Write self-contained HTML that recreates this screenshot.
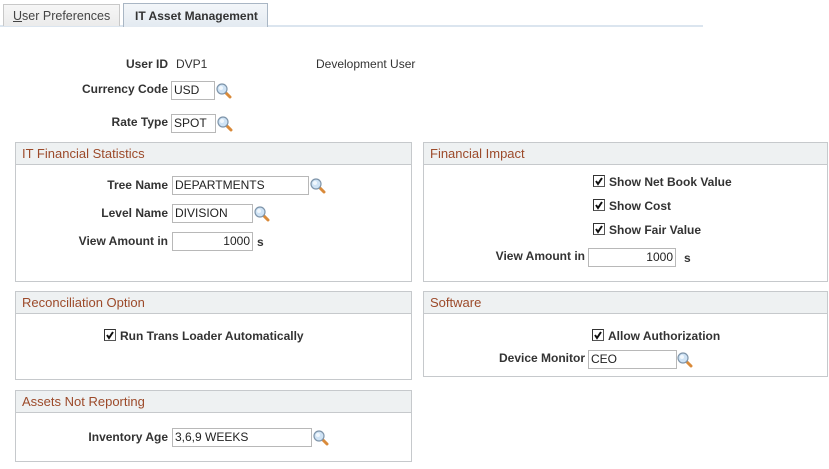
<!DOCTYPE html>
<html><head><meta charset="utf-8"><style>
*{margin:0;padding:0;box-sizing:border-box}
body{width:829px;height:469px;background:#fff;font-family:"Liberation Sans",Arial,sans-serif;font-size:12px;color:#333;position:relative;overflow:hidden}
.a{position:absolute;white-space:nowrap}
.lbl{position:absolute;font-weight:bold;color:#333;text-align:right;white-space:nowrap}
.inp{position:absolute;border:1px solid #b8b8b8;background:#fff;height:19px;font-size:12px;line-height:17px;padding-left:2px;color:#222;white-space:nowrap}
.r{text-align:right;padding-right:2px}
.box{position:absolute;border:1px solid #c6c9cc}
.hd{height:22px;background:#eef1f2;border-bottom:1px solid #c6c9cc;color:#9c4a2a;font-size:13px;line-height:21px;padding-left:6px}
.cb{position:absolute;width:12px;height:12px;border:1px solid #555;border-top-color:#333;border-left-color:#333;background:#fff}
.cb svg{position:absolute;left:0;top:0}
.ic{position:absolute;width:16px;height:16px}
</style></head><body>
<div class="a" style="left:0;top:25px;width:703px;height:2px;background:#dbe5ef"></div>
<div class="a" style="left:3px;top:4px;width:117px;height:22px;border:1px solid #c8c8c8;border-bottom:none;background:linear-gradient(#f6f6f6,#ebebeb);color:#444;font-size:12.5px;line-height:22px;padding-left:9px"><u>U</u>ser Preferences</div>
<div class="a" style="left:123px;top:3px;width:145px;height:24px;border:1px solid #a9b6c4;border-bottom:none;background:linear-gradient(#f3f6f9,#e3eaf1);color:#333;font-size:12px;font-weight:bold;line-height:24px;padding-left:11px">IT Asset Management</div>

<div class="lbl" style="right:661px;top:57px">User ID</div>
<div class="a" style="left:176px;top:57px">DVP1</div>
<div class="a" style="left:316px;top:57px">Development User</div>
<div class="lbl" style="right:661px;top:82px">Currency Code</div>
<div class="inp" style="left:171px;top:81px;width:44px">USD</div>
<div class="lbl" style="right:661px;top:115px">Rate Type</div>
<div class="inp" style="left:171px;top:114px;width:45px">SPOT</div>

<div class="box" style="left:15px;top:142px;width:397px;height:140px"><div class="hd">IT Financial Statistics</div></div>
<div class="lbl" style="right:661px;top:178px">Tree Name</div>
<div class="inp" style="left:172px;top:176px;width:137px">DEPARTMENTS</div>
<div class="lbl" style="right:661px;top:206px">Level Name</div>
<div class="inp" style="left:172px;top:204px;width:81px">DIVISION</div>
<div class="lbl" style="right:661px;top:234px">View Amount in</div>
<div class="inp r" style="left:172px;top:232px;width:81px">1000</div>
<div class="a" style="left:257px;top:235px;font-weight:bold">s</div>

<div class="box" style="left:423px;top:142px;width:405px;height:140px"><div class="hd">Financial Impact</div></div>
<div class="a" style="left:609px;top:175px;font-weight:bold">Show Net Book Value</div>
<div class="a" style="left:609px;top:199px;font-weight:bold">Show Cost</div>
<div class="a" style="left:609px;top:223px;font-weight:bold">Show Fair Value</div>
<div class="lbl" style="right:244px;top:249px">View Amount in</div>
<div class="inp r" style="left:588px;top:248px;width:88px">1000</div>
<div class="a" style="left:684px;top:251px;font-weight:bold">s</div>

<div class="box" style="left:15px;top:291px;width:397px;height:89px"><div class="hd">Reconciliation Option</div></div>
<div class="a" style="left:120px;top:329px;font-weight:bold">Run Trans Loader Automatically</div>

<div class="box" style="left:423px;top:291px;width:405px;height:86px"><div class="hd">Software</div></div>
<div class="a" style="left:608px;top:329px;font-weight:bold">Allow Authorization</div>
<div class="lbl" style="right:244px;top:351px">Device Monitor</div>
<div class="inp" style="left:588px;top:350px;width:89px">CEO</div>

<div class="box" style="left:15px;top:390px;width:397px;height:72px"><div class="hd">Assets Not Reporting</div></div>
<div class="lbl" style="right:661px;top:430px">Inventory Age</div>
<div class="inp" style="left:172px;top:428px;width:140px">3,6,9 WEEKS</div>

<div class="cb" style="left:593px;top:175px"><svg width="10" height="10"><path d="M2 5 L4 8 L8 2" stroke="#111" stroke-width="2" fill="none"/></svg></div>
<div class="cb" style="left:593px;top:199px"><svg width="10" height="10"><path d="M2 5 L4 8 L8 2" stroke="#111" stroke-width="2" fill="none"/></svg></div>
<div class="cb" style="left:593px;top:223px"><svg width="10" height="10"><path d="M2 5 L4 8 L8 2" stroke="#111" stroke-width="2" fill="none"/></svg></div>
<div class="cb" style="left:104px;top:329px"><svg width="10" height="10"><path d="M2 5 L4 8 L8 2" stroke="#111" stroke-width="2" fill="none"/></svg></div>
<div class="cb" style="left:592px;top:329px"><svg width="10" height="10"><path d="M2 5 L4 8 L8 2" stroke="#111" stroke-width="2" fill="none"/></svg></div>

<svg class="ic" style="left:216px;top:83px" viewBox="0 0 16 16"><path d="M9 9 L14 14" stroke="#d98a3a" stroke-width="3" stroke-linecap="round"/><circle cx="6" cy="6" r="5" fill="#cfe3f5" stroke="#7f95aa" stroke-width="1.2"/><circle cx="5" cy="5" r="2" fill="#fff" opacity=".7"/></svg>
<svg class="ic" style="left:217px;top:116px" viewBox="0 0 16 16"><path d="M9 9 L14 14" stroke="#d98a3a" stroke-width="3" stroke-linecap="round"/><circle cx="6" cy="6" r="5" fill="#cfe3f5" stroke="#7f95aa" stroke-width="1.2"/><circle cx="5" cy="5" r="2" fill="#fff" opacity=".7"/></svg>
<svg class="ic" style="left:310px;top:178px" viewBox="0 0 16 16"><path d="M9 9 L14 14" stroke="#d98a3a" stroke-width="3" stroke-linecap="round"/><circle cx="6" cy="6" r="5" fill="#cfe3f5" stroke="#7f95aa" stroke-width="1.2"/><circle cx="5" cy="5" r="2" fill="#fff" opacity=".7"/></svg>
<svg class="ic" style="left:254px;top:206px" viewBox="0 0 16 16"><path d="M9 9 L14 14" stroke="#d98a3a" stroke-width="3" stroke-linecap="round"/><circle cx="6" cy="6" r="5" fill="#cfe3f5" stroke="#7f95aa" stroke-width="1.2"/><circle cx="5" cy="5" r="2" fill="#fff" opacity=".7"/></svg>
<svg class="ic" style="left:677px;top:352px" viewBox="0 0 16 16"><path d="M9 9 L14 14" stroke="#d98a3a" stroke-width="3" stroke-linecap="round"/><circle cx="6" cy="6" r="5" fill="#cfe3f5" stroke="#7f95aa" stroke-width="1.2"/><circle cx="5" cy="5" r="2" fill="#fff" opacity=".7"/></svg>
<svg class="ic" style="left:313px;top:430px" viewBox="0 0 16 16"><path d="M9 9 L14 14" stroke="#d98a3a" stroke-width="3" stroke-linecap="round"/><circle cx="6" cy="6" r="5" fill="#cfe3f5" stroke="#7f95aa" stroke-width="1.2"/><circle cx="5" cy="5" r="2" fill="#fff" opacity=".7"/></svg>
</body></html>
